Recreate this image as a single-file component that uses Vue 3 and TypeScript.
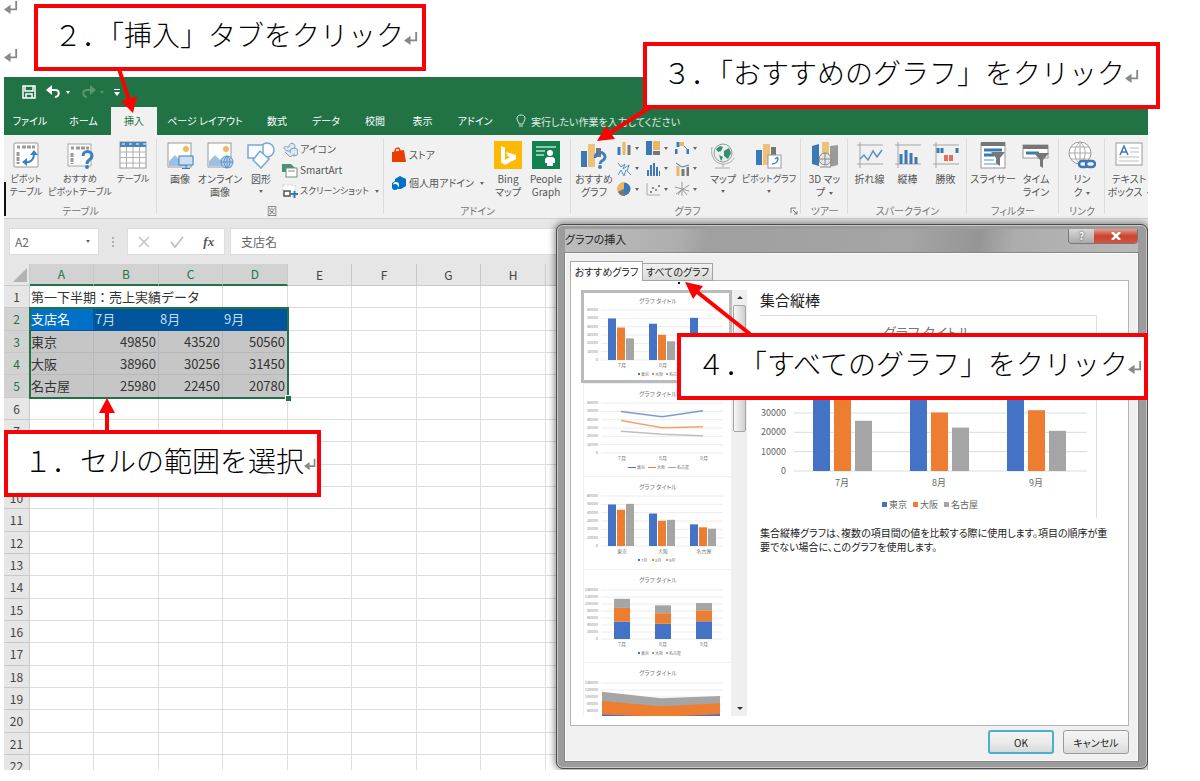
<script setup lang="ts">
import { ref } from 'vue'

interface Tool { icon?: string; lines: string[]; width: number; arrow?: boolean; inlineArrow?: boolean }
interface Bar { x: number; y: number; w: number; h: number; fill: string }

const BLUE = '#4472c4'
const ORANGE = '#ed7d31'
const GRAY = '#a5a5a5'
const series = [BLUE, ORANGE, GRAY]
const cities = ['東京', '大阪', '名古屋']
const months = ['7月', '8月', '9月']
const sales = [
  [49850, 43520, 50560],
  [38960, 30256, 31450],
  [25980, 22450, 20780],
]

const tabs = [
  { name: 'ファイル', width: 52 },
  { name: 'ホーム', width: 55 },
  { name: '挿入', width: 46 },
  { name: 'ページ レイアウト', width: 96 },
  { name: '数式', width: 48 },
  { name: 'データ', width: 50 },
  { name: '校閲', width: 48 },
  { name: '表示', width: 47 },
  { name: 'アドイン', width: 58 },
]
const activeTab = ref('挿入')
const cellName = ref('A2')
const formula = ref('支店名')

const frame = '<rect x="2" y="2" width="24" height="24" rx="1" fill="#fff" stroke="#999"/>'
const picture = '<rect x="2" y="2" width="23" height="24" fill="#fff" stroke="#999"/><circle cx="20" cy="8" r="3" fill="#f0b860"/><path d="M3 25V20L9 14L14 19L17 16L22 21V25Z" fill="#9dc1e0"/>'
const axes = '<path d="M4 1V27M1 4H27M1 23H27" stroke="#a5a5a5" fill="none"/>'
const icons: Record<string, string> = {
  pivot: frame + '<path d="M5 6H8M10 6H23M6 11V23" stroke="#999" stroke-width="3" stroke-dasharray="4 1" fill="none"/><path d="M13 21C19 22 22 18 22 13" fill="none" stroke="#3c7fc0" stroke-width="2"/><path d="M18 14L22 9L26 14ZM15 17V25L10 21Z" fill="#3c7fc0"/>',
  pivotHelp: '<rect x="2" y="3" width="23" height="22" fill="#fafafa" stroke="#aaa"/><path d="M5 7H8M10 7H23M6 12V23" stroke="#999" stroke-width="3" stroke-dasharray="4 1"/><path d="M17 15C17 9 26 9 26 15C26 19 21 18 21 23" fill="none" stroke="#3c7fc0" stroke-width="3"/><circle cx="21" cy="26" r="2" fill="#3c7fc0"/>',
  table: '<rect x="1" y="1" width="26" height="26" fill="#fff" stroke="#999"/><rect x="1" y="1" width="26" height="5" fill="#4b83bd"/><path d="M3 3H27" stroke="#fff" stroke-dasharray="3 4"/><path d="M7.500 6V27M14 6V27M20.500 6V27M1 11H27M1 16.500H27M1 22H27" stroke="#b0b0b0" fill="none"/>',
  image: picture + '<rect x="13" y="15" width="14" height="9" fill="#cde0f1" stroke="#3c7fc0"/><path d="M20 24V27M16 27.500H24" stroke="#3c7fc0"/>',
  online: picture + '<circle cx="21" cy="21" r="6" fill="#b8d1e9" stroke="#5b92c8"/><path d="M15 21H27M21 15V27M21 15C17 18 17 24 21 27M21 15C25 18 25 24 21 27" stroke="#5b92c8" fill="none"/>',
  shapes: '<g fill="#f8fbff" stroke="#7aa7d2" stroke-width="1.500"><circle cx="20" cy="9" r="7"/><rect x="1" y="4" width="15" height="13"/><path d="M13 10L22 18L14 27L6 19Z"/></g>',
  iconSet: '<g fill="#dce9f4" stroke="#7b9fbf"><path d="M7 6C7 1 13 1 13 6L11 10H5C0 8 2 4 5 6Z"/><circle cx="12" cy="11" r="4"/><path d="M3 11L8 16L13 13"/></g>',
  smart: '<path d="M0 2H9L13 6L9 10H0Z" fill="#4d9174"/><rect x="4" y="6" width="11" height="9" fill="#fff" stroke="#6f8c80"/><path d="M6 9H13" stroke="#888"/>',
  screenshot: '<rect x="1" y="2" width="12" height="11" fill="#fff" stroke="#ccc" stroke-dasharray="2 2"/><rect x="2" y="8" width="6" height="5" fill="none" stroke="#555" stroke-width="1.500"/><path d="M9 11H16M12.500 8V15" stroke="#3678b5" stroke-width="2"/>',
  store: '<path d="M1 5L13 3L15 15H1Z" fill="#eb3c00"/><path d="M4 5C4 0 9 0 9 4" fill="none" stroke="#eb3c00" stroke-width="1.500"/>',
  addin: '<path d="M4 4L9 1L15 4V11L10 14H7L1 12V8L4 6Z" fill="#0072c6"/><circle cx="5" cy="10" r="3" fill="#fff"/><circle cx="4" cy="12" r="3" fill="#0072c6"/>',
  bing: '<rect width="28" height="28" fill="#ffb900"/><path d="M7 5L11 6.500V19L16 16L13.500 15L12 11L22 14V18L11 24L7 21.500Z" fill="#fff"/>',
  people: '<rect width="28" height="28" fill="#138050"/><path d="M4 6H24M4 10H13M4 14H12" stroke="#b8e2cd" stroke-width="1.500"/><circle cx="18" cy="12" r="3" fill="#fff"/><path d="M15 16H21L23 18V22H21V25H15V22H13V18Z" fill="#fff"/>',
  recommend: '<rect x="1" y="10" width="6" height="16" fill="#3b78b4"/><rect x="8" y="3" width="7" height="23" fill="#ecc27a"/><rect x="16" y="7" width="5" height="9" fill="#777"/><path d="M15 17C15 10 25 10 25 16C25 20 20 19 20 23" fill="none" stroke="#3c7fc0" stroke-width="3"/><circle cx="20" cy="26" r="2" fill="#3c7fc0"/>',
  map: '<circle cx="14" cy="12" r="9" fill="#e6eeee" stroke="#999"/><path d="M7 8L11 5L14 6L12 10L9 11ZM15 10L20 7L22 12L19 18L15 15ZM10 14L14 16L12 20Z" fill="#388d6c"/><path d="M3 6C1 15 6 23 14 23C19 23 23 21 25 17M14 23V26M6 27H21" fill="none" stroke="#aaa"/>',
  pivotChart: '<rect x="1" y="9" width="6" height="15" fill="#3b78b4"/><rect x="8" y="3" width="7" height="21" fill="#ecc27a"/><rect x="16" y="6" width="5" height="9" fill="#777"/><rect x="13" y="14" width="13" height="13" fill="#fff" stroke="#999"/><path d="M17 23C21 23 23 20 23 17M20 18L23 16" fill="none" stroke="#3c7fc0" stroke-width="1.500"/>',
  map3d: '<path d="M1 5L8 3V25L1 23Z" fill="#3b78b4"/><rect x="11" y="1" width="7" height="17" fill="#ecc27a"/><path d="M19 5L27 4V24L19 26Z" fill="#9b9b9b"/><circle cx="14" cy="18" r="6" fill="#e5e5e5" stroke="#888"/><path d="M8 18H20M14 12V24M9 26H20" stroke="#888"/>',
  sparkLine: axes + '<path d="M4 18L8 14L12 19L17 10L21 16L26 9" fill="none" stroke="#5b90c4" stroke-width="1.500"/>',
  sparkCol: axes + '<path d="M7 23V13M12 23V9M17 23V12M22 23V16" stroke="#3b78b4" stroke-width="3"/>',
  winLoss: axes + '<path d="M6 7V12M10 7V12M25 7V12" stroke="#3b78b4" stroke-width="3"/><path d="M14 14V20M19 14V20" stroke="#e2705a" stroke-width="4"/>',
  slicer: '<rect x="2" y="2" width="24" height="25" fill="#fff" stroke="#999"/><rect x="2" y="1" width="24" height="4" fill="#777"/><path d="M5 9H23M5 14H15" stroke="#3b78b4" stroke-width="3"/><path d="M5 19H15M5 23H20" stroke="#a9c9e6" stroke-width="2"/><path d="M12 11H26L21 17V25L17 22V17Z" fill="#777"/>',
  timeline: '<rect x="1" y="4" width="25" height="13" fill="#fff" stroke="#999"/><rect x="1" y="4" width="25" height="4" fill="#777"/><path d="M4 12H17" stroke="#3b78b4" stroke-width="3"/><path d="M12 12H27L21 19V27L18 25V19Z" fill="#777"/>',
  link: '<circle cx="12" cy="12" r="11" fill="#fff" stroke="#999"/><path d="M1 12H23M12 1V23M3 6H21M3 18H21M12 1C5 7 5 17 12 23M12 1C19 7 19 17 12 23" fill="none" stroke="#aaa"/><g fill="#f1f1f1" stroke="#3b78b4" stroke-width="2.500"><rect x="11" y="20" width="9" height="6" rx="3"/><rect x="18" y="20" width="9" height="6" rx="3"/></g>',
  textbox: '<rect x="1" y="2" width="26" height="22" fill="#fff" stroke="#999"/><path d="M5 14L9 5L13 14M7 11H11" fill="none" stroke="#3b78b4" stroke-width="1.500"/><path d="M15 7H24M15 11H24M4 16H24M4 20H24" stroke="#bbb"/>',
}

const miniCharts = [
  '<path d="M2 14V6" stroke="#3b78b4" stroke-width="3"/><path d="M7 14V1" stroke="#ecb765" stroke-width="3"/><path d="M12 14V4" stroke="#777" stroke-width="3"/>',
  '<rect width="6" height="14" fill="#3b78b4"/><rect x="7" width="7" height="9" fill="#ecb765"/><rect x="7" y="10" width="7" height="4" fill="#777"/>',
  '<path d="M1 13V8M13 13V8" stroke="#3b78b4" stroke-width="3"/><path d="M3 6V1" stroke="#3b78b4" stroke-width="3"/><path d="M7 5V1" stroke="#ecb765" stroke-width="4"/><path d="M9 5L13 9" stroke="#777"/>',
  '<path d="M1 1L4 5L8 2L6 7L12 3L10 9L14 13M1 13L4 8L7 14L9 8" fill="none" stroke="#5b90c4"/>',
  '<path d="M2 14V8M5 14V3M8 14V1M11 14V5M14 14V9" stroke="#3b78b4" stroke-width="2"/>',
  '<path d="M3 14V4" stroke="#ecb765" stroke-width="3"/><path d="M8 14V7M13 14V5" stroke="#777" stroke-width="3"/><path d="M1 1L7 5L14 3" fill="none" stroke="#3b78b4"/>',
  '<circle cx="7" cy="7" r="6.500" fill="#3b78b4"/><path d="M7 7V0A7 7 0 0 0 1 10Z" fill="#ecb765"/><path d="M7 7L1 10A7 7 0 0 0 8 14Z" fill="#777"/>',
  '<path d="M1 1V13H14" fill="none" stroke="#aaa"/><path d="M4 10H6M6 6H8M9 8H11M12 4H14" stroke="#888" stroke-width="2"/>',
  '<path d="M7 0V14M0 5L14 9M14 3L1 12M3 13L7 7L12 13" fill="none" stroke="#999"/>',
]

const tableTools: Tool[] = [
  { icon: 'pivot', lines: ['ピボット', 'テーブル'], width: 44 },
  { icon: 'pivotHelp', lines: ['おすすめ', 'ピボットテーブル'], width: 64 },
  { icon: 'table', lines: ['テーブル'], width: 42 },
]
const pictureTools: Tool[] = [
  { icon: 'image', lines: ['画像'], width: 40 },
  { icon: 'online', lines: ['オンライン', '画像'], width: 40 },
  { icon: 'shapes', lines: ['図形'], width: 42, arrow: true },
]
const smallTools = [
  { icon: 'iconSet', text: 'アイコン', arrow: false },
  { icon: 'smart', text: 'SmartArt', arrow: false },
  { icon: 'screenshot', text: 'スクリーンショット', arrow: true },
]
const addinTools: Tool[] = [
  { icon: 'bing', lines: ['Bing', 'マップ'], width: 38 },
  { icon: 'people', lines: ['People', 'Graph'], width: 38 },
]
const mapTools: Tool[] = [
  { icon: 'map', lines: ['マップ'], width: 34, arrow: true },
  { icon: 'pivotChart', lines: ['ピボットグラフ'], width: 58, arrow: true },
]
const tailGroups: { caption: string; width: number; tools: Tool[] }[] = [
  { caption: 'ツアー', width: 47, tools: [{ icon: 'map3d', lines: ['3D マッ', 'プ'], width: 44, inlineArrow: true }] },
  {
    caption: 'スパークライン', width: 119, tools: [
      { icon: 'sparkLine', lines: ['折れ線'], width: 38 },
      { icon: 'sparkCol', lines: ['縦棒'], width: 38 },
      { icon: 'winLoss', lines: ['勝敗'], width: 38 },
    ],
  },
  {
    caption: 'フィルター', width: 92, tools: [
      { icon: 'slicer', lines: ['スライサー'], width: 46 },
      { icon: 'timeline', lines: ['タイム', 'ライン'], width: 40 },
    ],
  },
  { caption: 'リンク', width: 46, tools: [{ icon: 'link', lines: ['リン', 'ク'], width: 42, inlineArrow: true }] },
]
const textTool: Tool = { icon: 'textbox', lines: ['テキスト', 'ボックス'], width: 48, inlineArrow: true }

const columns = ['A', 'B', 'C', 'D', 'E', 'F', 'G', 'H']
const emptyRows = Array.from({ length: 17 }, (_, i) => i + 6)

const byMonth = months.map((_, m) => sales.map(r => r[m]))

function clustered(groups: number[][], first: number, pitch: number, w: number, step: number, base: number, unit: number): Bar[] {
  return groups.flatMap((g, i) => g.map((v, k) => ({
    x: first + i * pitch + k * step, y: base - v * unit, w, h: v * unit, fill: series[k],
  })))
}
const thumbUnit = 50 / 60000
const stackUnit = 49 / 140000
const stackedBars: Bar[] = byMonth.flatMap((g, i) => {
  let y = 69
  return g.map((v, k) => {
    y -= v * stackUnit
    return { x: 30 + i * 41, y, w: 16, h: v * stackUnit, fill: series[k] }
  })
})
const thumbs = [
  { kind: 'bars', bars: clustered(byMonth, 24, 41, 8, 9, 69, thumbUnit), labels: months, legend: cities, ticks: [60000, 50000, 40000, 30000, 20000, 10000, 0] },
  { kind: 'lines', bars: [] as Bar[], labels: months, legend: cities, ticks: [60000, 50000, 40000, 30000, 20000, 10000, 0] },
  { kind: 'bars', bars: clustered(sales, 24, 41, 8, 9, 69, thumbUnit), labels: cities, legend: months, ticks: [60000, 50000, 40000, 30000, 20000, 10000, 0] },
  { kind: 'bars', bars: stackedBars, labels: months, legend: cities, ticks: [140000, 120000, 100000, 80000, 60000, 40000, 20000, 0] },
  { kind: 'area', bars: [] as Bar[], labels: [] as string[], legend: [] as string[], ticks: [140000, 120000, 100000, 80000, 60000] },
]
const tickY = (i: number, list: number[]) => list[0] === 140000 ? 20 + i * 7 : 19 + (i * 50) / 6
const linePoints = (row: number[]) => row.map((v, i) => `${37 + i * 41},${69 - v * thumbUnit}`).join(' ')
const areaPoints = (upto: number) => {
  const tops = byMonth.map((g, i) => `${18 + i * 59},${69 - g.slice(0, upto).reduce((a, b) => a + b, 0) * stackUnit}`)
  return `${tops.join(' ')} 136,69 18,69`
}

const previewTicks = [30000, 20000, 10000, 0]
const previewUnit = 116 / 60000
const previewBars = clustered(byMonth, 53, 97, 17, 21, 156, previewUnit)
</script>

<template>
  <main class="page">
    <span class="mark mark-a"><svg class="ret" viewBox="0 0 16 16"><path d="M13 1V10H5" /><path class="tip" d="M0 10L7 5V15Z" /></svg></span>
    <span class="mark mark-b"><svg class="ret" viewBox="0 0 16 16"><path d="M13 1V10H5" /><path class="tip" d="M0 10L7 5V15Z" /></svg></span>

    <section class="excel">
      <header class="quick">
        <button type="button" class="qbtn" aria-label="上書き保存">
          <svg width="14" height="14" viewBox="0 0 14 14" fill="none" stroke="#fff" stroke-width="1.500"><path d="M1 1H13V13H1ZM3 1V6H11V1M4 13V9H10V13" /></svg>
        </button>
        <button type="button" class="qbtn" aria-label="元に戻す">
          <svg width="16" height="14" viewBox="0 0 16 14"><path d="M3 5H9C14 5 14 11 9 12" fill="none" stroke="#fff" stroke-width="2" /><path d="M0 5L6 0V10Z" fill="#fff" /></svg>
          <i class="caret light"></i>
        </button>
        <button type="button" class="qbtn faded" aria-label="やり直し">
          <svg width="16" height="14" viewBox="0 0 16 14"><path d="M13 5H7C2 5 2 11 7 12" fill="none" stroke="#fff" stroke-width="2" /><path d="M16 5L10 0V10Z" fill="#fff" /></svg>
          <i class="caret light"></i>
        </button>
        <button type="button" class="qbtn" aria-label="カスタマイズ">
          <svg width="6" height="7" viewBox="0 0 6 7"><path d="M0 0H6V1H0ZM0 3H6L3 7Z" fill="#fff" /></svg>
        </button>
      </header>

      <nav class="tabs">
        <button
          v-for="t in tabs" :key="t.name" type="button" class="tab" :class="{ active: activeTab === t.name }"
          :style="{ width: t.width + 'px' }" @click="activeTab = t.name"
        >{{ t.name }}</button>
        <button type="button" class="tell">
          <svg width="10" height="14" viewBox="0 0 10 14" fill="none" stroke="#d5e8dc"><path d="M3 10C3 8 1 7 1 4C1 0 9 0 9 4C9 7 7 8 7 10ZM3 12H7" /></svg>
          実行したい作業を入力してください
        </button>
      </nav>

      <div class="ribbon">
        <section class="group g-table">
          <div class="tools">
            <button v-for="t in tableTools" :key="t.icon" type="button" class="tool" :style="{ width: t.width + 'px' }">
              <svg class="big" viewBox="0 0 28 28" v-html="icons[t.icon!]"></svg>
              <span v-for="l in t.lines" :key="l">{{ l }}</span>
            </button>
          </div>
          <h2>テーブル</h2>
        </section>

        <section class="group g-pic">
          <div class="tools">
            <button v-for="t in pictureTools" :key="t.icon" type="button" class="tool" :style="{ width: t.width + 'px' }">
              <svg class="big" viewBox="0 0 28 28" v-html="icons[t.icon!]"></svg>
              <span v-for="l in t.lines" :key="l">{{ l }}</span>
              <i v-if="t.arrow" class="caret below"></i>
            </button>
            <div class="stack">
              <button v-for="s in smallTools" :key="s.icon" type="button" class="small" :class="{ tight: s.arrow }">
                <svg class="mid" viewBox="0 0 16 16" v-html="icons[s.icon]"></svg>{{ s.text }}<i v-if="s.arrow" class="caret"></i>
              </button>
            </div>
          </div>
          <h2>図</h2>
        </section>

        <section class="group g-addin">
          <div class="tools">
            <div class="stack two">
              <button type="button" class="small"><svg class="mid" viewBox="0 0 16 16" v-html="icons.store"></svg>ストア</button>
              <button type="button" class="small"><svg class="mid" viewBox="0 0 16 16" v-html="icons.addin"></svg>個人用アドイン<i class="caret"></i></button>
            </div>
            <button v-for="t in addinTools" :key="t.icon" type="button" class="tool" :style="{ width: t.width + 'px' }">
              <svg class="big" viewBox="0 0 28 28" v-html="icons[t.icon!]"></svg>
              <span v-for="l in t.lines" :key="l">{{ l }}</span>
            </button>
          </div>
          <h2>アドイン</h2>
        </section>

        <section class="group g-chart">
          <div class="tools">
            <button type="button" class="tool rec">
              <svg class="big" viewBox="0 0 28 28" v-html="icons.recommend"></svg>
              <span>おすすめ</span><span>グラフ</span>
            </button>
            <div class="minis">
              <button v-for="(m, i) in miniCharts" :key="i" type="button" class="mini" :aria-label="'グラフ ' + (i + 1)">
                <svg width="14" height="14" viewBox="0 0 14 14" v-html="m"></svg><i class="caret"></i>
              </button>
            </div>
            <button v-for="t in mapTools" :key="t.icon" type="button" class="tool" :style="{ width: t.width + 'px' }">
              <svg class="big" viewBox="0 0 28 28" v-html="icons[t.icon!]"></svg>
              <span v-for="l in t.lines" :key="l" :class="{ tight: l.length > 6 }">{{ l }}</span>
              <i class="caret below"></i>
            </button>
          </div>
          <h2>グラフ</h2>
          <svg class="launcher" viewBox="0 0 8 8"><path d="M1 6V1H6M3 3L7 7M7 4V7H4" fill="none" stroke="#777" /></svg>
        </section>

        <section v-for="g in tailGroups" :key="g.caption" class="group" :style="{ width: g.width + 'px' }">
          <div class="tools centered">
            <button v-for="t in g.tools" :key="t.icon" type="button" class="tool" :style="{ width: t.width + 'px' }">
              <svg class="big" viewBox="0 0 28 28" v-html="icons[t.icon!]"></svg>
              <span v-for="(l, i) in t.lines" :key="l">{{ l }}<i v-if="t.inlineArrow && i === 1" class="caret"></i></span>
            </button>
          </div>
          <h2>{{ g.caption }}</h2>
        </section>

        <section class="group last">
          <div class="tools">
            <button type="button" class="tool" :style="{ width: textTool.width + 'px' }">
              <svg class="big" viewBox="0 0 28 28" v-html="icons.textbox"></svg>
              <span>テキスト</span><span>ボックス<i class="caret"></i></span>
            </button>
          </div>
        </section>
      </div>

      <div class="formula">
        <label class="namebox"><input v-model="cellName" aria-label="名前ボックス"><i class="caret"></i></label>
        <span class="grip"></span>
        <div class="fx">
          <svg width="12" height="12" viewBox="0 0 12 12"><path d="M1 1L11 11M11 1L1 11" stroke="#c2c2c2" stroke-width="1.500" /></svg>
          <svg width="14" height="12" viewBox="0 0 14 12"><path d="M1 6L5 11L13 1" fill="none" stroke="#c2c2c2" stroke-width="2" /></svg>
          <em>fx</em>
        </div>
        <input v-model="formula" class="value" aria-label="数式バー">
      </div>

      <div class="sheet">
        <table>
          <colgroup>
            <col class="c-head"><col v-for="(c, i) in columns" :key="c" :class="i % 2 ? 'c-b' : 'c-a'"><col>
          </colgroup>
          <thead>
            <tr>
              <th class="corner"><svg width="14" height="14" viewBox="0 0 14 14"><path d="M14 0V14H0Z" fill="#b2b2b2" /></svg></th>
              <th v-for="(c, i) in columns" :key="c" :class="{ sel: i < 4 }">{{ c }}</th>
              <th></th>
            </tr>
          </thead>
          <tbody>
            <tr><th>1</th><td colspan="3" class="title">第一下半期：売上実績データ</td><td v-for="n in 6" :key="n"></td></tr>
            <tr class="head"><th class="sel">2</th><td class="first">支店名</td><td v-for="m in months" :key="m">{{ m }}</td><td v-for="n in 5" :key="n" class="plain"></td></tr>
            <tr v-for="(city, i) in cities" :key="city" class="data">
              <th class="sel">{{ i + 3 }}</th><td>{{ city }}</td><td v-for="v in sales[i]" :key="v" class="num">{{ v }}</td><td v-for="n in 5" :key="n" class="plain"></td>
            </tr>
            <tr v-for="r in emptyRows" :key="r"><th>{{ r }}</th><td v-for="n in 9" :key="n"></td></tr>
          </tbody>
        </table>
        <div class="selection"></div>
      </div>

      <section class="dialog" role="dialog" aria-label="グラフの挿入">
        <header class="dlg-title">
          <h1>グラフの挿入</h1>
          <div class="winbtns">
            <button type="button" class="help" aria-label="ヘルプ">?</button>
            <button type="button" class="close" aria-label="閉じる"><svg width="10" height="8" viewBox="0 0 10 8"><path d="M1 0L9 8M9 0L1 8" stroke="#fff" stroke-width="2.500" /></svg></button>
          </div>
        </header>
        <div class="client">
          <div class="dlg-tabs">
            <button type="button" class="dt on">おすすめグラフ</button>
            <button type="button" class="dt">すべてのグラフ</button>
          </div>
          <div class="pane">
            <div class="list">
              <button v-for="(t, n) in thumbs" :key="n" type="button" class="thumb" :class="{ picked: n === 0 }">
                <svg viewBox="0 0 147 93">
                  <text x="74" y="12" class="t-title">グラフ タイトル</text>
                  <g v-for="(v, i) in t.ticks" :key="v">
                    <line x1="17" x2="139" :y1="tickY(i, t.ticks)" :y2="tickY(i, t.ticks)" stroke="#ececec" />
                    <text x="14" :y="tickY(i, t.ticks) + 1" class="t-tick">{{ v }}</text>
                  </g>
                  <rect v-for="(b, i) in t.bars" :key="i" :x="b.x" :y="b.y" :width="b.w" :height="b.h" :fill="b.fill" />
                  <g v-if="t.kind === 'lines'" fill="none" stroke-width="1.500">
                    <polyline v-for="(r, i) in sales" :key="i" :points="linePoints(r)" :stroke="series[i]" stroke-opacity="0.700" />
                  </g>
                  <g v-if="t.kind === 'area'">
                    <polygon :points="areaPoints(3)" :fill="GRAY" /><polygon :points="areaPoints(2)" :fill="ORANGE" /><polygon :points="areaPoints(1)" :fill="BLUE" />
                  </g>
                  <text v-for="(l, i) in t.labels" :key="l" :x="38 + i * 41" y="76" class="t-lab">{{ l }}</text>
                  <g v-for="(l, i) in t.legend" :key="l">
                    <rect v-if="t.kind === 'bars'" :x="54 + i * 14" y="82" width="2" height="2" :fill="series[i]" />
                    <rect v-else :x="44 + i * 20" y="83" width="8" height="1" :fill="series[i]" />
                    <text :x="t.kind === 'bars' ? 57 + i * 14 : 53 + i * 20" y="85" class="t-leg">{{ l }}</text>
                  </g>
                </svg>
              </button>
            </div>
            <div class="scroll"><i class="up"></i><span class="knob"></span><i class="down"></i></div>
            <article class="preview">
              <h3>集合縦棒</h3>
              <svg class="chart" viewBox="0 0 337 203">
                <path d="M0 0.500H336.500V203" fill="none" stroke="#dedede" />
                <text x="167" y="23" class="p-title">グラフ タイトル</text>
                <g v-for="v in previewTicks" :key="v">
                  <line x1="34" x2="327" :y1="156 - v * previewUnit" :y2="156 - v * previewUnit" stroke="#dcdcdc" />
                  <text x="26" :y="159 - v * previewUnit" class="p-tick">{{ v }}</text>
                </g>
                <rect v-for="(b, i) in previewBars" :key="i" :x="b.x" :y="b.y" :width="b.w" :height="b.h" :fill="b.fill" />
                <text v-for="(m, i) in months" :key="m" :x="82 + i * 97" y="171" class="p-lab">{{ m }}</text>
                <g v-for="(c, i) in cities" :key="c">
                  <rect :x="122 + i * 31" y="187" width="5" height="5" :fill="series[i]" />
                  <text :x="129 + i * 31" y="193" class="p-leg">{{ c }}</text>
                </g>
              </svg>
              <p>集合縦棒グラフは、複数の項目間の値を比較する際に使用します。項目の順序が重<br>要でない場合に、このグラフを使用します。</p>
            </article>
          </div>
          <footer class="actions">
            <button type="button" class="btn ok">OK</button>
            <button type="button" class="btn">キャンセル</button>
          </footer>
        </div>
      </section>
    </section>

    <span class="cursor"></span>

    <svg class="arrows" viewBox="0 0 1200 781">
      <g stroke="#f00" stroke-width="4" fill="none">
        <path d="M119 69L130 103M652 106L608 134M750 334L696 291M107 432V408" />
      </g>
      <g fill="#f00">
        <path d="M133 113L121 101L137 96ZM597 141L606 126L615 139ZM685 282L703 286L693 299ZM107 398L99 413H115Z" />
      </g>
      <path d="M678 282H680V284H678Z" fill="#111" />
    </svg>

    <p class="note n1">１．セルの範囲を選択<svg class="ret" viewBox="0 0 16 16"><path d="M13 1V10H5" /><path class="tip" d="M0 10L7 5V15Z" /></svg></p>
    <p class="note n2">２．「挿入」タブをクリック<svg class="ret" viewBox="0 0 16 16"><path d="M13 1V10H5" /><path class="tip" d="M0 10L7 5V15Z" /></svg></p>
    <p class="note n3">３．「おすすめのグラフ」をクリック<svg class="ret" viewBox="0 0 16 16"><path d="M13 1V10H5" /><path class="tip" d="M0 10L7 5V15Z" /></svg></p>
    <p class="note n4">４．「すべてのグラフ」をクリック<svg class="ret" viewBox="0 0 16 16"><path d="M13 1V10H5" /><path class="tip" d="M0 10L7 5V15Z" /></svg></p>
  </main>
</template>

<style>
body { margin: 0; background: #fff; }
</style>

<style scoped>
* { box-sizing: border-box; }
.page {
  position: relative; display: flex; height: 100vh; min-width: 1180px; padding: 77px 52px 11px 4px; overflow: hidden;
  font-family: "Noto Sans CJK JP", "Liberation Sans", sans-serif; font-size: 10px; color: #555;
}
button { border: 0; padding: 0; background: none; font: inherit; color: inherit; }
h1, h2, h3, p { margin: 0; font-weight: 400; }
.excel { position: relative; display: flex; flex: 1; flex-direction: column; min-width: 0; overflow: hidden; background: #e6e6e6; font-feature-settings: "palt"; }
.quick { display: flex; flex: none; align-items: center; gap: 10px; height: 30px; padding-left: 18px; background: #217346; }
.qbtn { display: flex; align-items: center; gap: 4px; height: 20px; }
.faded { opacity: 0.25; }
.caret { display: inline-block; flex: none; width: 0; border: 2px solid transparent; border-top: 3px solid #666; border-bottom: 0; margin-left: 4px; vertical-align: middle; }
.caret.light { margin-left: 0; border-top-color: #fff; }
.tabs { display: flex; flex: none; height: 28px; background: #217346; color: #fff; }
.tab { flex: none; line-height: 28px; white-space: nowrap; }
.tab.active { background: #f1f1f1; color: #217346; }
.tell { display: flex; align-items: center; gap: 5px; margin-left: 12px; color: #e0ece5; white-space: nowrap; }
.ribbon { display: flex; flex: none; height: 84px; background: #f1f1f1; border-bottom: 1px solid #d0d0d0; overflow: hidden; }
.group { position: relative; display: flex; flex: none; flex-direction: column; justify-content: space-between; padding: 6px 0 0; }
.group::after { content: ""; position: absolute; top: 4px; right: 0; bottom: 4px; width: 1px; background: #dcdcdc; }
.group.last::after { display: none; }
.group h2 { font-size: 10px; line-height: 14px; text-align: center; color: #777; }
.g-table { width: 153px; }
.g-pic { width: 227px; padding-left: 3px; }
.g-addin { width: 187px; }
.g-chart { width: 230px; padding-left: 3px; }
.tools { display: flex; height: 63px; }
.tools.centered { justify-content: center; }
.tool { display: flex; flex: none; flex-direction: column; align-items: center; line-height: 13px; white-space: nowrap; }
.g-table .tool, .tight { font-size: 9px; }
.big { width: 28px; height: 28px; margin-bottom: 3px; }
.below { margin: 5px 0 0; }
.rec { width: 40px; }
.stack { display: flex; flex-direction: column; justify-content: space-between; height: 58px; }
.stack.two { width: 105px; padding: 6px 0 8px 7px; }
.small { display: flex; align-items: center; gap: 2px; height: 16px; line-height: 16px; white-space: nowrap; }
.mid { width: 16px; height: 16px; }
.minis { display: grid; grid-template-columns: repeat(3, 29px); align-content: space-between; width: 92px; height: 55px; padding-left: 3px; }
.mini { display: flex; align-items: center; }
.launcher { position: absolute; right: 3px; bottom: 3px; width: 8px; height: 8px; }
.last { flex: 1; min-width: 0; overflow: hidden; }
.formula { display: flex; flex: none; gap: 5px; height: 45px; padding: 9px 0 9px 5px; font-size: 12px; }
.namebox { display: flex; align-items: center; width: 90px; padding-right: 8px; background: #fff; border: 1px solid #dcdcdc; }
input { min-width: 0; border: 0; background: #fff; font: inherit; color: #666; font-size: 12px; outline: 0; }
.namebox input { flex: 1; padding: 0 0 0 5px; }
.grip { width: 18px; margin: 8px 0 7px; background: radial-gradient(circle, #b0b0b0 1px, transparent 1px) center / 18px 4px repeat-y; }
.fx { display: flex; align-items: center; justify-content: space-around; width: 98px; background: #fff; border: 1px solid #dcdcdc; }
.fx em { font: italic 700 13px "Liberation Serif", serif; }
.value { flex: 1; padding: 0 0 0 10px; border: 1px solid #dcdcdc; }
.sheet { position: relative; flex: 1; min-height: 0; overflow: hidden; background: #fff; font-size: 13px; font-feature-settings: normal; }
table { width: 100%; table-layout: fixed; border-collapse: separate; border-spacing: 0; }
.c-head { width: 26px; }
.c-a { width: 64px; }
.c-b { width: 65px; }
th, td { height: 22px; padding: 0 2px 0 1px; border-right: 1px solid #dedede; border-bottom: 1px solid #dedede; line-height: 20px; text-align: left; white-space: nowrap; overflow: hidden; }
tbody tr:nth-child(3n + 2) > * { height: 23px; }
th { padding: 0; background: #e6e6e6; border-color: #c9c9c9; font-size: 12px; font-weight: 400; text-align: center; color: #444; }
th.sel { background: #d2d2d2; color: #217346; }
thead th.sel { border-bottom: 2px solid #217346; }
.corner svg { display: block; margin-left: 9px; }
.title, .data td, .head td { color: #333; }
.head td { background: #00559c; border-color: #00559c; color: #c5dcf0; }
.head td.first { background: #0070c8; color: #fff; }
.data td { background: #c6c6c6; border-color: #b8b8b8; }
.head td.plain, .data td.plain { background: #fff; border-color: #dedede; }
.data td.num { text-align: right; }
.selection { position: absolute; top: 43px; left: 25px; width: 260px; height: 92px; border: 2px solid #217346; }
.selection::after { content: ""; position: absolute; right: -4px; bottom: -4px; width: 5px; height: 5px; background: #217346; border: 1px solid #fff; border-width: 1px 0 0 1px; }

.dialog {
  position: absolute; top: 147px; right: 0; bottom: 1px; left: 552px; display: flex; flex-direction: column;
  padding: 4px 9px 7px 8px; border: 1px solid #4b4b4b; border-radius: 7px; background: #9c9c9c;
  box-shadow: 0 0 6px 2px rgba(0, 0, 0, 0.4), inset 0 0 0 1px #c9c9c9;
}
.dlg-title { display: flex; flex: none; justify-content: space-between; height: 24px; background: linear-gradient(100deg, #bdbdbd, #aeaeae 20%, #a0a0a0 25%, #a5a5a5 60%, #959595 72%, #acacac 78%, #b9b9b9); }
.dlg-title h1 { font-size: 11px; line-height: 20px; color: #222; }
.winbtns { display: flex; height: 15px; border: 1px solid #777; border-top: 0; border-radius: 0 0 4px 4px; overflow: hidden; }
.help { width: 25px; background: linear-gradient(#d8d8d8, #aaa); color: #fff; font-weight: 700; line-height: 14px; text-shadow: 0 0 2px #222; }
.close { display: flex; align-items: center; justify-content: center; width: 43px; background: linear-gradient(#e3a093, #c9432e 50%, #d8533c); }
.client { display: flex; flex: 1; flex-direction: column; min-height: 0; padding: 7px 8px 6px 4px; background: #f0f0f0; border: 1px solid #fafafa; outline: 1px solid #868686; }
.dlg-tabs { position: relative; z-index: 1; display: flex; flex: none; align-items: flex-end; height: 20px; margin-bottom: -1px; }
.dt { width: 70px; height: 18px; border: 1px solid #a5a5a5; border-left: 0; background: linear-gradient(#f1f1f1, #d9d9d9); line-height: 16px; color: #222; white-space: nowrap; }
.dt.on { width: 73px; height: 20px; border-left: 1px solid #a5a5a5; border-bottom: 0; background: #fff; }
.pane { display: flex; flex: 1; min-height: 0; padding: 9px 9px 9px 10px; border: 1px solid #b4b4b4; background: #fff; }
.list { display: flex; flex: none; flex-direction: column; width: 151px; overflow: hidden; }
.thumb { flex: none; width: 149px; height: 93px; border: 1px solid #efefef; border-bottom: 0; margin-left: 2px; }
.thumb svg { display: block; width: 147px; height: 93px; }
.thumb.picked { width: 151px; margin-left: 0; border: 3px solid #bbb; }
.thumb.picked svg { margin: -2px 0 0; }
.t-title { font-size: 6px; text-anchor: middle; fill: #777; }
.t-tick { font-size: 4px; text-anchor: end; fill: #888; }
.t-lab { font-size: 5px; text-anchor: middle; fill: #777; }
.t-leg { font-size: 4px; fill: #777; }
.scroll { display: flex; flex: none; flex-direction: column; align-items: center; width: 15px; background: #efefef; }
.up, .down { flex: none; width: 0; border: 3px solid transparent; }
.up { margin: 6px 0; border-top: 0; border-bottom-color: #333; }
.down { margin: auto 0 6px; border-bottom: 0; border-top-color: #333; }
.knob { width: 13px; height: 127px; border: 1px solid #a6a6a6; border-radius: 2px; background: linear-gradient(90deg, #f6f6f6, #cfcfcf); }
.preview { flex: 1; min-width: 0; padding-left: 13px; }
.preview h3 { height: 25px; font-size: 15px; line-height: 20px; color: #222; }
.chart { display: block; width: 337px; height: 203px; }
.p-title { font-size: 14px; text-anchor: middle; fill: #777; }
.p-tick { font-size: 9px; text-anchor: end; fill: #666; }
.p-lab { font-size: 9px; text-anchor: middle; fill: #666; }
.p-leg { font-size: 9px; fill: #666; }
.preview p { padding-top: 8px; line-height: 14px; color: #222; white-space: nowrap; }
.actions { display: flex; flex: none; justify-content: flex-end; gap: 9px; padding-top: 4px; }
.btn { width: 66px; height: 24px; border: 1px solid #9a9a9a; border-radius: 3px; background: linear-gradient(#f4f4f4, #ebebeb 50%, #d9d9d9); color: #222; }
.btn.ok { border: 2px solid #4bb0d0; }

.cursor { position: absolute; top: 182px; left: 4px; width: 2px; height: 34px; background: #111; }
.arrows { position: absolute; top: 0; left: 0; width: 1200px; height: 781px; pointer-events: none; }
.mark { position: absolute; left: 4px; }
.mark-a { top: 0; }
.mark-b { top: 48px; }
.ret { width: 15px; height: 15px; fill: none; stroke: #888; stroke-width: 2; }
.ret .tip { fill: #888; stroke: none; }
.note {
  position: absolute; display: flex; align-items: center; height: 67px; border: 4px solid #f80208; padding: 0 0 7px 16px;
  background: #fff; color: #000; font-size: 28px; font-weight: 300; line-height: 36px; white-space: nowrap;
}
.note .ret { margin-top: 9px; }
.n1 { top: 430px; left: 4px; width: 317px; }
.n2 { top: 4px; left: 34px; width: 392px; }
.n3 { top: 42px; left: 643px; width: 517px; }
.n4 { top: 333px; left: 677px; width: 471px; }
</style>
